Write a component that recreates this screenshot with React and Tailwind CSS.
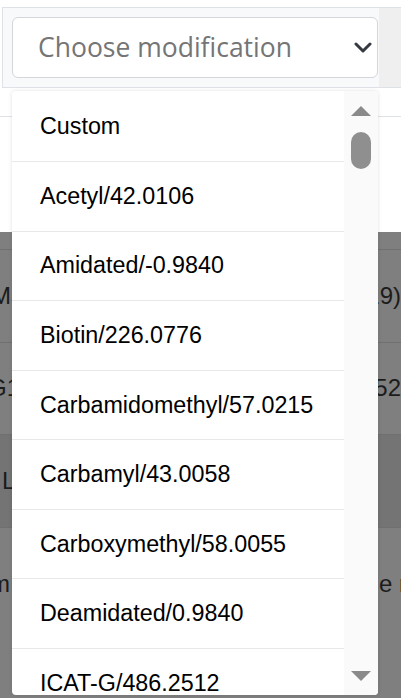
const mods = [
  "Custom",
  "Acetyl/42.0106",
  "Amidated/-0.9840",
  "Biotin/226.0776",
  "Carbamidomethyl/57.0215",
  "Carbamyl/43.0058",
  "Carboxymethyl/58.0055",
  "Deamidated/0.9840",
  "ICAT-G/486.2512",
  "ICAT-H/349.1629",
];

// rows of the page that sits behind the backdrop
const backRows = [
  { left: "Ma", right: "(19)", lm: "-ml-[9px]", rm: "mr-0", dark: false },
  { left: "G1", right: "(52)", lm: "-ml-[12px]", rm: "-mr-[8px]", dark: false },
  { left: "L", right: "", lm: "ml-[2px]", rm: "mr-0", dark: true },
];

function Triangle({ up }) {
  return (
    <svg width="20" height="10" viewBox="0 0 20 10" className="block">
      <path d={up ? "M0 10 L10 0 L20 10 Z" : "M0 0 L20 0 L10 10 Z"} fill="#8a8a8a" />
    </svg>
  );
}

export default function App() {
  return (
    <div className="relative w-[401px] h-[698px] overflow-hidden bg-white font-['Liberation_Sans',Arial,sans-serif]">
      <div className="h-[7px]" />

      {/* header with the select */}
      <div className="ml-[2px] flex border-t border-b border-l border-[#dee2e6] bg-[#f8f9fa]">
        <div className="w-[376px] pl-[9px] pt-[9px] pb-[9px]">
          <div className="flex h-[61px] w-[366px] items-center justify-between rounded-[6px] border border-[#d3d6da] bg-white pl-[25px] pr-[5px]">
            <span className="font-['Open_Sans',sans-serif] text-[26.5px] text-[#757575]">
              Choose modification
            </span>
            <svg width="18" height="11" viewBox="0 0 18 11" className="block">
              <path d="M2 2 L9 9 L16 2" fill="none" stroke="#343a40" strokeWidth="3" strokeLinecap="round" strokeLinejoin="round" />
            </svg>
          </div>
        </div>
        <div className="flex-1 bg-[#efefef]" />
      </div>

      <div className="h-[29px] border-b border-[#dee2e6]" />
      <div className="h-[115px]" />

      {/* page behind the backdrop */}
      <div className="bg-[#7f7f7f] text-[24px] text-[#1c1c1c]">
        <div className="h-[18px] border-b border-[#707070]" />
        {backRows.map((r, i) => (
          <div
            key={i}
            className={`flex h-[92.5px] items-center justify-between overflow-hidden whitespace-nowrap border-b border-[#707070] ${r.dark ? "bg-[#747474]" : ""}`}
          >
            <span className={r.lm}>{r.left}</span>
            <span className={r.rm}>{r.right}</span>
          </div>
        ))}
        <div className="flex h-[112px] items-center justify-between overflow-hidden whitespace-nowrap">
          <span className="-ml-[10px]">m</span>
          <span className="-mr-[6px]">e r</span>
        </div>
        <div className="h-[60px]" />
      </div>

      {/* native dropdown list */}
      <div className="absolute left-[12px] top-[91px] flex h-[604px] w-[366px] overflow-hidden rounded-[4px] bg-white shadow-[0_0_4px_rgba(0,0,0,0.12)]">
        <div className="w-[332px] pt-[1.5px]">
          {mods.map((m) => (
            <div
              key={m}
              className="flex h-[69.57px] items-center border-b border-[#e8e8e8] pl-[28px] text-[23.3px] text-black"
            >
              {m}
            </div>
          ))}
        </div>
        <div className="flex w-[34px] flex-col items-center bg-[#fafafa] pt-[15px] pb-[14px]">
          <Triangle up />
          <div className="mt-[16px] h-[37px] w-[20px] rounded-full bg-[#8f8f8f]" />
          <div className="flex-1" />
          <Triangle />
        </div>
      </div>
    </div>
  );
}
